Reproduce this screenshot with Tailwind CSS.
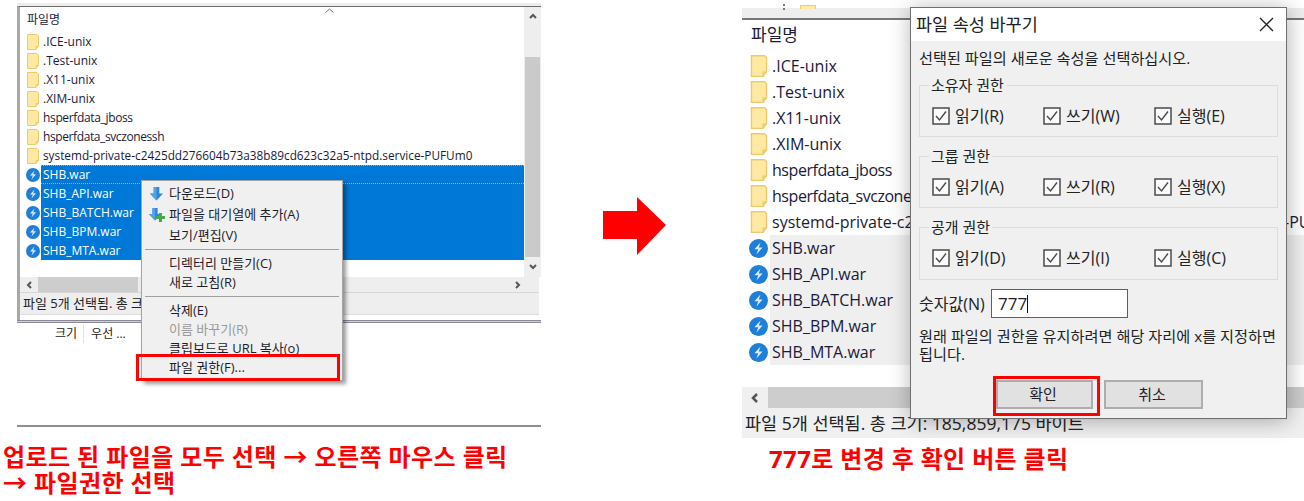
<!DOCTYPE html>
<html lang="ko">
  <head>
    <meta charset="UTF-8" />
    <title>파일 권한 변경</title>
    <script src="https://cdn.jsdelivr.net/npm/@tailwindcss/browser@4"></script>
  </head>
  <body class="bg-white">
    <svg class="hidden">
      <symbol id="folder" viewBox="0 0 12 16">
        <path d="M.5.5h9.500l1.500 1.500v10l-2.500 3.500h-8.500z" fill="#ffe9a3" stroke="#f0c96a" />
        <path d="M9 15.500v-3h2.500" fill="none" stroke="#f0c96a" />
      </symbol>
      <symbol id="war" viewBox="0 0 14 14">
        <circle cx="7" cy="7" r="7" fill="#1f7fd6" />
        <path d="M8.500 2.500 4 7.500h2.800L5.500 11.500 10 6.300H7.200z" fill="#dbeafe" />
      </symbol>
      <symbol id="down" viewBox="0 0 16 16">
        <path d="M5 1h6v7h4l-7 7.500L1 8h4z" fill="#2f86dc" />
        <path d="M5 1h3v14.500L1 8h4z" fill="#4ea3ea" />
      </symbol>
      <symbol id="check" viewBox="0 0 18 18">
        <rect x="1" y="1" width="16" height="16" fill="#fbfbfb" stroke="#4b4b4b" stroke-width="1.500" />
        <path d="M4 9l3.500 4L14 4.500" fill="none" stroke="#4b4b4b" stroke-width="1.400" />
      </symbol>
    </svg>

    <div class="relative flex w-[1304px] h-[501px] overflow-hidden font-['Open_Sans','Noto_Sans_CJK_KR',sans-serif]">
      <!-- left capture -->
      <div class="relative w-[524px] ml-[17px] mr-[62px] shrink-0 pt-[3px]">
        <div class="h-[3px] bg-[#ededed]"></div>
        <div class="h-[314px] flex flex-col border-t border-t-[#6e6e6e] border-l-[3px] border-l-[#a8a8a8] text-[12px] text-[#1a1a3a]">
          <div class="flex flex-1">
            <div class="flex-1 min-w-0 flex flex-col">
              <div class="h-[25px] pl-[7px] flex items-center">파일명</div>
              <div class="h-[19px] flex items-center gap-[4px] pl-[7px]"><svg class="w-[12px] h-[16px] shrink-0"><use href="#folder" /></svg>.ICE-unix</div>
              <div class="h-[19px] flex items-center gap-[4px] pl-[7px]"><svg class="w-[12px] h-[16px] shrink-0"><use href="#folder" /></svg>.Test-unix</div>
              <div class="h-[19px] flex items-center gap-[4px] pl-[7px]"><svg class="w-[12px] h-[16px] shrink-0"><use href="#folder" /></svg>.X11-unix</div>
              <div class="h-[19px] flex items-center gap-[4px] pl-[7px]"><svg class="w-[12px] h-[16px] shrink-0"><use href="#folder" /></svg>.XIM-unix</div>
              <div class="h-[19px] flex items-center gap-[4px] pl-[7px] tracking-[-0.35px]"><svg class="w-[12px] h-[16px] shrink-0"><use href="#folder" /></svg>hsperfdata_jboss</div>
              <div class="h-[19px] flex items-center gap-[4px] pl-[7px] tracking-[-0.4px]"><svg class="w-[12px] h-[16px] shrink-0"><use href="#folder" /></svg>hsperfdata_svczonessh</div>
              <div class="h-[19px] flex items-center gap-[4px] pl-[7px] whitespace-nowrap text-[11.8px]"><svg class="w-[12px] h-[16px] shrink-0"><use href="#folder" /></svg>systemd-private-c2425dd276604b73a38b89cd623c32a5-ntpd.service-PUFUm0</div>
              <div class="h-[19px] flex items-center pl-[6px]"><svg class="w-[14px] h-[14px] mr-[1px] shrink-0"><use href="#war" /></svg><span class="flex-1 h-full flex items-center pl-[2px] bg-[#0078d7] text-white border-y border-dotted border-y-[#e0a060]">SHB.war</span></div>
              <div class="h-[19px] flex items-center pl-[6px]"><svg class="w-[14px] h-[14px] mr-[1px] shrink-0"><use href="#war" /></svg><span class="flex-1 h-full flex items-center pl-[2px] bg-[#0078d7] text-white">SHB_API.war</span></div>
              <div class="h-[19px] flex items-center pl-[6px]"><svg class="w-[14px] h-[14px] mr-[1px] shrink-0"><use href="#war" /></svg><span class="flex-1 h-full flex items-center pl-[2px] bg-[#0078d7] text-white">SHB_BATCH.war</span></div>
              <div class="h-[19px] flex items-center pl-[6px]"><svg class="w-[14px] h-[14px] mr-[1px] shrink-0"><use href="#war" /></svg><span class="flex-1 h-full flex items-center pl-[2px] bg-[#0078d7] text-white">SHB_BPM.war</span></div>
              <div class="h-[19px] flex items-center pl-[6px]"><svg class="w-[14px] h-[14px] mr-[1px] shrink-0"><use href="#war" /></svg><span class="flex-1 h-full flex items-center pl-[2px] bg-[#0078d7] text-white">SHB_MTA.war</span></div>
            </div>
            <div class="w-[17px] bg-[#eeeeee] flex flex-col items-center">
              <div class="h-[50px] w-full flex items-start justify-center pt-[6px]"><svg class="w-[8px] h-[6px]" viewBox="0 0 8 6"><path d="M1 5l3-3 3 3" fill="none" stroke="#555" stroke-width="2" /></svg></div>
              <div class="w-[15px] h-[200px] bg-[#cacaca]"></div>
              <div class="flex-1 w-full flex items-center justify-center"><svg class="w-[8px] h-[6px]" viewBox="0 0 8 6"><path d="M1 1l3 3 3-3" fill="none" stroke="#555" stroke-width="2" /></svg></div>
            </div>
          </div>
          <div class="h-[16px] bg-[#eeeeee] flex items-center border-b border-b-[#d6d6d6] mr-[2px]">
            <div class="w-[18px] flex justify-center"><svg class="w-[6px] h-[8px]" viewBox="0 0 6 8"><path d="M5 1 2 4l3 3" fill="none" stroke="#555" stroke-width="2" /></svg></div>
            <div class="w-[100px] h-full bg-[#cdcdcd]"></div>
            <div class="flex-1"></div>
            <div class="w-[40px] pl-[16px]"><svg class="w-[6px] h-[8px] block" viewBox="0 0 6 8"><path d="M1 1l3 3-3 3" fill="none" stroke="#555" stroke-width="2" /></svg></div>
          </div>
          <div class="h-[22px] bg-[#eeeeee] flex items-center pl-[3px] border-b border-b-[#dcdcdc] mr-[2px] text-[#222] text-[13px]">파일 5개 선택됨. 총 크</div>
          <div class="h-[5px]"></div>
        </div>
        <div class="h-[3px] border-y border-[#8a8a96] bg-[#cfcfcf]"></div>
        <div class="h-[22px] flex items-center pl-[38px] text-[12px] text-[#222]">
          <span>크기</span><span class="ml-[6px] mr-[7px] w-px h-[18px] bg-[#e2e2e2]"></span><span>우선 ...</span>
        </div>
        <div class="mt-[80px] h-[2px] bg-[#8e8e96]"></div>
        <p class="mt-[17px] -ml-[14px] w-[530px] text-[24px] leading-[26px] tracking-[0.4px] font-bold text-[#ff0000] whitespace-nowrap">업로드 된 파일을 모두 선택 → 오른쪽 마우스 클릭<br />→ 파일권한 선택</p>

        <!-- sort marker on the header -->
        <svg class="absolute left-[308px] top-[8px] w-[9px] h-[5px]" viewBox="0 0 9 5"><path d="M.5 4.500l4-3.500 4 3.500" fill="none" stroke="#777" /></svg>

        <!-- context menu -->
        <div class="absolute left-[124px] top-[180px] w-[202px] h-[201px] bg-[#f0f0f0] border border-[#a5a5a5] shadow-[3px_3px_4px_rgba(0,0,0,0.4)] text-[13px] text-[#1c1c2c] pt-[2px]">
          <div class="h-[21px] flex items-center pl-[27px] relative"><svg class="absolute left-[7px] top-[3px] w-[15px] h-[15px]"><use href="#down" /></svg>다운로드(D)</div>
          <div class="h-[22px] flex items-center pl-[27px] relative"><svg class="absolute left-[6px] top-[3px] w-[14px] h-[14px]"><use href="#down" /></svg><svg class="absolute left-[14px] top-[9px] w-[9px] h-[9px]" viewBox="0 0 9 9"><path d="M3 0h3v3h3v3H6v3H3V6H0V3h3z" fill="#4ca64c" /></svg>파일을 대기열에 추가(A)</div>
          <div class="h-[19px] flex items-center pl-[27px]">보기/편집(V)</div>
          <div class="h-px mx-[3px] mt-[4px] mb-[4px] bg-[#a0a0a0]"></div>
          <div class="h-[19px] flex items-center pl-[27px] mt-[1px]">디렉터리 만들기(C)</div>
          <div class="h-[19px] flex items-center pl-[27px]">새로 고침(R)</div>
          <div class="h-px mx-[3px] mt-[4px] mb-[4px] bg-[#a0a0a0]"></div>
          <div class="h-[19px] flex items-center pl-[27px] mt-[1px]">삭제(E)</div>
          <div class="h-[19px] flex items-center pl-[27px] text-[#9a9a9a]">이름 바꾸기(R)</div>
          <div class="h-[19px] flex items-center pl-[27px]">클립보드로 URL 복사(o)</div>
          <div class="h-[19px] flex items-center pl-[27px]">파일 권한(F)...</div>
        </div>
        <div class="absolute left-[119px] top-[354px] w-[204px] h-[27px] border-[3px] border-[#ff0000]"></div>
      </div>

      <!-- arrow -->
      <div class="w-[139px] shrink-0 mt-[197px]">
        <svg class="w-[63px] h-[58px]" viewBox="0 0 63 58"><path d="M0 14h34V0l29 28-29 30V42H0z" fill="#ff0000" /></svg>
      </div>

      <!-- right capture -->
      <div class="relative flex-1 min-w-0 pt-[8px]">
        <div class="h-[10px] bg-[#eeeeee]"></div>
        <div class="h-[2px] bg-[#777777]"></div>
        <div class="h-[367px] flex flex-col text-[16px] text-[#1a1a3a]">
          <div class="h-[27px] pl-[9px] pt-[2px] flex items-center text-[17px]">파일명</div>
          <div class="h-[26px] mt-[6px] flex items-center gap-[4px] pl-[8px]"><svg class="w-[18px] h-[22px] shrink-0"><use href="#folder" /></svg>.ICE-unix</div>
          <div class="h-[26px] flex items-center gap-[4px] pl-[8px]"><svg class="w-[18px] h-[22px] shrink-0"><use href="#folder" /></svg>.Test-unix</div>
          <div class="h-[26px] flex items-center gap-[4px] pl-[8px]"><svg class="w-[18px] h-[22px] shrink-0"><use href="#folder" /></svg>.X11-unix</div>
          <div class="h-[26px] flex items-center gap-[4px] pl-[8px]"><svg class="w-[18px] h-[22px] shrink-0"><use href="#folder" /></svg>.XIM-unix</div>
          <div class="h-[26px] flex items-center gap-[4px] pl-[8px] tracking-[-0.45px]"><svg class="w-[18px] h-[22px] shrink-0"><use href="#folder" /></svg>hsperfdata_jboss</div>
          <div class="h-[26px] flex items-center gap-[4px] pl-[8px] tracking-[-0.45px]"><svg class="w-[18px] h-[22px] shrink-0"><use href="#folder" /></svg>hsperfdata_svczonessh</div>
          <div class="h-[26px] flex items-center gap-[4px] pl-[8px] whitespace-nowrap"><svg class="w-[18px] h-[22px] shrink-0"><use href="#folder" /></svg>systemd-private-c2425dd276604b73a38b89cd623c32a5-ntpd.service-PUFUm0</div>
          <div class="h-[26px] flex items-center pl-[7px]"><svg class="w-[19px] h-[19px] mr-[2px] shrink-0"><use href="#war" /></svg><span class="flex-1 h-full flex items-center pl-[2px] bg-[#efefef]">SHB.war</span></div>
          <div class="h-[26px] flex items-center pl-[7px]"><svg class="w-[19px] h-[19px] mr-[2px] shrink-0"><use href="#war" /></svg><span class="flex-1 h-full flex items-center pl-[2px] bg-[#efefef]">SHB_API.war</span></div>
          <div class="h-[26px] flex items-center pl-[7px]"><svg class="w-[19px] h-[19px] mr-[2px] shrink-0"><use href="#war" /></svg><span class="flex-1 h-full flex items-center pl-[2px] bg-[#efefef]">SHB_BATCH.war</span></div>
          <div class="h-[26px] flex items-center pl-[7px]"><svg class="w-[19px] h-[19px] mr-[2px] shrink-0"><use href="#war" /></svg><span class="flex-1 h-full flex items-center pl-[2px] bg-[#efefef]">SHB_BPM.war</span></div>
          <div class="h-[26px] flex items-center pl-[7px]"><svg class="w-[19px] h-[19px] mr-[2px] shrink-0"><use href="#war" /></svg><span class="flex-1 h-full flex items-center pl-[2px] bg-[#efefef]">SHB_MTA.war</span></div>
        </div>
        <div class="h-[21px] bg-[#f0f0f0] flex items-center">
          <div class="w-[26px] flex justify-center"><svg class="w-[8px] h-[10px]" viewBox="0 0 8 10"><path d="M6 1 2 5l4 4" fill="none" stroke="#555" stroke-width="2.500" /></svg></div>
          <div class="flex-1 h-full bg-[#cdcdcd]"></div>
        </div>
        <div class="h-[30px] bg-[#f0f0f0] flex items-center pl-[3px] text-[17.5px] text-[#222] whitespace-nowrap">파일 5개 선택됨. 총 크기: 185,859,175 바이트</div>
        <p class="mt-[7px] ml-[27px] text-[24px] leading-[28px] tracking-[0.35px] font-bold text-[#ff0000] whitespace-nowrap">777로 변경 후 확인 버튼 클릭</p>

        <!-- bits of the toolbar above the list -->
        <div class="absolute left-[41px] top-[4px] h-[6px] border-l-2 border-dotted border-l-[#777]"></div>
        <div class="absolute left-[58px] top-[5px] w-[16px] h-[4px] bg-[#ffe9a3] border border-b-0 border-[#f0c96a]"></div>

        <!-- permissions dialog -->
        <div class="absolute left-[168px] top-[7px] w-[377px] h-[412px] bg-[#f0f0f0] border border-[#6f6f6f] shadow-[1px_2px_20px_rgba(0,0,0,0.3)] text-[16px] text-[#222] flex flex-col">
          <div class="h-[33px] bg-white flex items-center justify-between pl-[5px] pr-[12px] text-[17.5px]">
            <span>파일 속성 바꾸기</span>
            <svg class="w-[15px] h-[15px]" viewBox="0 0 15 15"><path d="M1 1l13 13M14 1 1 14" stroke="#222" stroke-width="1.300" /></svg>
          </div>
          <div class="flex-1 px-[8px]">
            <p class="h-[34px] flex items-center text-[15.2px] whitespace-nowrap">선택된 파일의 새로운 속성을 선택하십시오.</p>
            <fieldset class="h-[62px] pl-[12px] border border-[#dcdcdc]">
              <legend class="-ml-[3px] px-[2px] text-[15px] leading-[20px]">소유자 권한</legend>
              <div class="flex h-[28px] items-center mt-[7px]">
                <label class="w-[111px] flex items-center gap-[5px]"><svg class="w-[18px] h-[18px] shrink-0"><use href="#check" /></svg>읽기(R)</label>
                <label class="w-[111px] flex items-center gap-[5px]"><svg class="w-[18px] h-[18px] shrink-0"><use href="#check" /></svg>쓰기(W)</label>
                <label class="flex items-center gap-[5px]"><svg class="w-[18px] h-[18px] shrink-0"><use href="#check" /></svg>실행(E)</label>
              </div>
            </fieldset>
            <fieldset class="h-[62px] mt-[9px] pl-[12px] border border-[#dcdcdc]">
              <legend class="-ml-[3px] px-[2px] text-[15px] leading-[20px]">그룹 권한</legend>
              <div class="flex h-[28px] items-center mt-[7px]">
                <label class="w-[111px] flex items-center gap-[5px]"><svg class="w-[18px] h-[18px] shrink-0"><use href="#check" /></svg>읽기(A)</label>
                <label class="w-[111px] flex items-center gap-[5px]"><svg class="w-[18px] h-[18px] shrink-0"><use href="#check" /></svg>쓰기(R)</label>
                <label class="flex items-center gap-[5px]"><svg class="w-[18px] h-[18px] shrink-0"><use href="#check" /></svg>실행(X)</label>
              </div>
            </fieldset>
            <fieldset class="h-[63px] mt-[9px] pl-[12px] border border-[#dcdcdc]">
              <legend class="-ml-[3px] px-[2px] text-[15px] leading-[20px]">공개 권한</legend>
              <div class="flex h-[28px] items-center mt-[7px]">
                <label class="w-[111px] flex items-center gap-[5px]"><svg class="w-[18px] h-[18px] shrink-0"><use href="#check" /></svg>읽기(D)</label>
                <label class="w-[111px] flex items-center gap-[5px]"><svg class="w-[18px] h-[18px] shrink-0"><use href="#check" /></svg>쓰기(I)</label>
                <label class="flex items-center gap-[5px]"><svg class="w-[18px] h-[18px] shrink-0"><use href="#check" /></svg>실행(C)</label>
              </div>
            </fieldset>
            <div class="flex items-center mt-[9px] h-[29px]">
              <span class="w-[72px]">숫자값(N)</span>
              <div class="w-[137px] h-[29px] bg-white border border-[#0078d7] flex items-center pl-[6px] text-[17px]">777<span class="w-px h-[18px] bg-[#111]"></span></div>
            </div>
            <p class="mt-[9px] leading-[18px] text-[15.2px] whitespace-nowrap">원래 파일의 권한을 유지하려면 해당 자리에 x를 지정하면<br />됩니다.</p>
            <div class="flex gap-[11px] ml-[77px] mt-[17px] text-[15px]">
              <div class="w-[97px] h-[29px] bg-[#e1e1e1] border-2 border-[#adadad] flex items-center justify-center pr-[3px]">확인</div>
              <div class="w-[99px] h-[29px] bg-[#e1e1e1] border-2 border-[#adadad] flex items-center justify-center pr-[3px]">취소</div>
            </div>
          </div>
        </div>
        <div class="absolute left-[251px] top-[376px] w-[107px] h-[40px] border-[3px] border-[#ff0000]"></div>
      </div>
    </div>
  </body>
</html>
